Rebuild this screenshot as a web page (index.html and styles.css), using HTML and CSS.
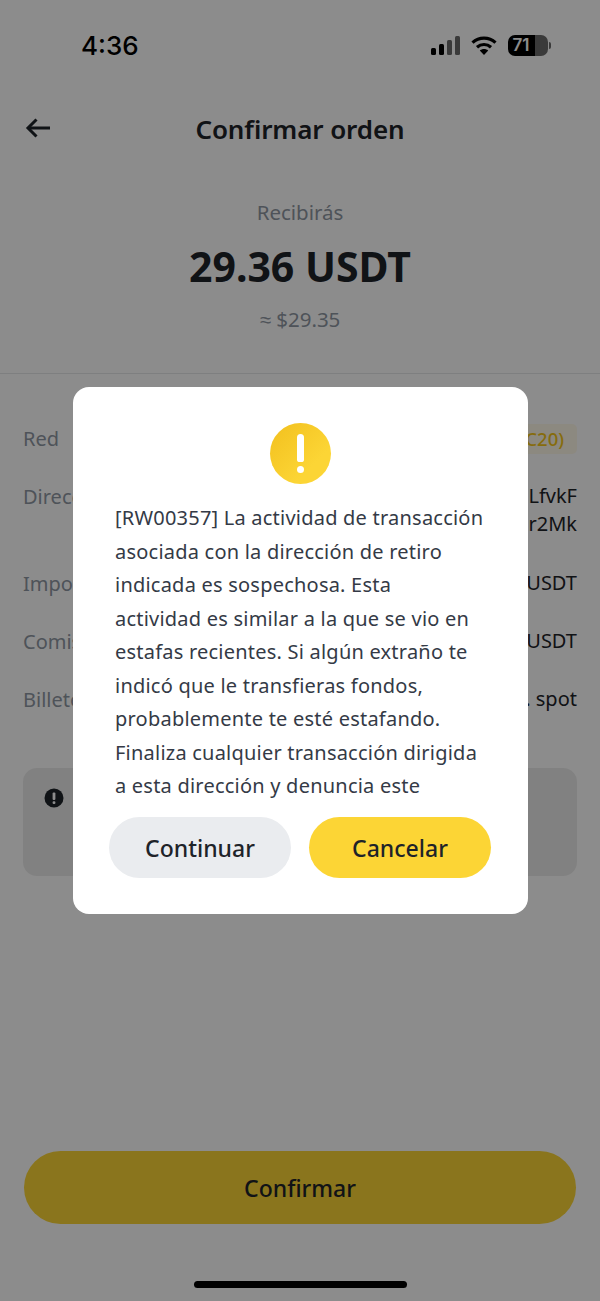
FILE: index.html
```html
<!DOCTYPE html>
<html lang="es">
<head>
    <meta charset="UTF-8">
    <meta name="viewport" content="width=device-width, initial-scale=1.0">
    <title>Confirmar orden</title>
    <link rel="stylesheet" href="styles.css">
</head>
<body>
    <div class="page">
        <div class="status-bar">
            <span class="time">4:36</span>
            <div class="status-icons">
                <svg class="signal" width="30" height="19" viewBox="0 0 30 19">
                    <rect x="1" y="12" width="5" height="7" rx="1.5" fill="#000"/>
                    <rect x="9" y="8" width="5" height="11" rx="1.5" fill="#000"/>
                    <rect x="17" y="4" width="5" height="15" rx="1.5" fill="#6a6a6a"/>
                    <rect x="25" y="0" width="5" height="19" rx="1.5" fill="#6a6a6a"/>
                </svg>
                <svg class="wifi" width="26" height="19" viewBox="0 0 26 19" fill="none" stroke="#000" stroke-width="3.2">
                    <path d="M1.5 6.6C8 .6 18 .6 24.5 6.6"/>
                    <path d="M6 11.2c4-3.6 10-3.6 14 0"/>
                    <path d="M13 19l-4.2-4.4c2.4-2 6-2 8.400 0z" fill="#000" stroke="none"/>
                </svg>
                <div class="battery">
                    <div class="battery-fill">71</div>
                    <div class="battery-nub"></div>
                </div>
            </div>
        </div>

        <header class="top-bar">
            <svg class="back" width="26" height="22" viewBox="0 0 26 22" fill="none" stroke="#1e2329" stroke-width="3">
                <path d="M25 11H3"/>
                <path d="M11.500 2.500L3 11l8.500 8.500"/>
            </svg>
            <h1>Confirmar orden</h1>
        </header>

        <section class="summary">
            <div class="summary-label">Recibirás</div>
            <div class="summary-amount">29.36 USDT</div>
            <div class="summary-fiat">≈ $29.35</div>
        </section>

        <section class="details">
            <div class="row">
                <span class="row-label">Red</span>
                <span class="tag">(ERC20)</span>
            </div>
            <div class="row row-address">
                <span class="row-label">Dirección</span>
                <span class="row-value">LfvkF<br>r2Mk</span>
            </div>
            <div class="row">
                <span class="row-label">Importe</span>
                <span class="row-value">USDT</span>
            </div>
            <div class="row">
                <span class="row-label">Comisión</span>
                <span class="row-value">USDT</span>
            </div>
            <div class="row">
                <span class="row-label">Billetera</span>
                <span class="row-value">Bill. spot</span>
            </div>
            <div class="notice">
                <svg width="20" height="20" viewBox="0 0 20 20">
                    <circle cx="10" cy="10" r="9.500" fill="#1e2329"/>
                    <rect x="8.600" y="4.500" width="2.800" height="7.500" rx="1" fill="#fff"/>
                    <rect x="8.600" y="13.300" width="2.800" height="2.800" rx="1" fill="#fff"/>
                </svg>
            </div>
        </section>

        <div class="footer">
            <button class="confirm" type="button">Confirmar</button>
            <div class="home-indicator"></div>
        </div>

        <div class="overlay">
            <div class="modal">
                <div class="warn-icon">
                    <span class="warn-bar"></span>
                    <span class="warn-dot"></span>
                </div>
                <div class="modal-text">
                    <p>[RW00357] La actividad de transacción<br>asociada con la dirección de retiro<br>indicada es sospechosa. Esta<br>actividad es similar a la que se vio en<br>estafas recientes. Si algún extraño te<br>indicó que le transfieras fondos,<br>probablemente te esté estafando.<br>Finaliza cualquier transacción dirigida<br>a esta dirección y denuncia este</p>
                </div>
                <div class="modal-actions">
                    <button class="btn btn-grey" type="button">Continuar</button>
                    <button class="btn btn-yellow" type="button">Cancelar</button>
                </div>
            </div>
        </div>
    </div>
</body>
</html>
```

FILE: styles.css
```css
* {
    box-sizing: border-box;
}
body {
    margin: 0;
    font-family: "Noto Sans", Arial, sans-serif;
    color: #1e2329;
    background-color: #fff;
}
.page {
    position: relative;
    display: flex;
    flex-direction: column;
    width: 600px;
    height: 1301px;
    overflow: hidden;
    background-color: #fff;
}

/* status bar */
.status-bar {
    display: flex;
    justify-content: space-between;
    align-items: center;
    height: 90px;
    padding: 0 49px 0 81px;
}
.time {
    font-family: Inter, sans-serif;
    font-size: 26px;
    font-weight: 500;
    color: #000;
}
.status-icons {
    display: flex;
    align-items: center;
    gap: 11px;
}
.battery {
    display: flex;
    align-items: center;
    position: relative;
}
.battery-fill {
    width: 40px;
    height: 21px;
    padding-right: 14px;
    border-radius: 7px;
    background: linear-gradient(90deg, #000 68%, #6a6a6a 68%);
    color: #fff;
    font-family: Inter, sans-serif;
    font-size: 17px;
    font-weight: 600;
    line-height: 21px;
    text-align: center;
}
.battery-nub {
    width: 2px;
    height: 7px;
    margin-left: 1px;
    border-radius: 0 2px 2px 0;
    background-color: #6a6a6a;
}

/* header */
.top-bar {
    position: relative;
    display: flex;
    justify-content: center;
    align-items: center;
    height: 80px;
}
.top-bar h1 {
    margin: 0;
    font-size: 26px;
    font-weight: 600;
    letter-spacing: -0.1px;
    line-height: 76px;
    height: 78px;
}
.back {
    position: absolute;
    left: 25px;
    top: 27px;
}

/* amount */
.summary {
    height: 204px;
    padding-top: 29px;
    border-bottom: 1px solid #e6e8ea;
    text-align: center;
}
.summary-label {
    font-size: 20.500px;
    line-height: 26px;
    color: #8f97a3;
}
.summary-amount {
    margin-top: 13px;
    font-size: 41px;
    font-weight: 700;
    line-height: 56px;
}
.summary-fiat {
    margin-top: 12px;
    font-size: 20.500px;
    line-height: 26px;
    color: #8f97a3;
}

/* rows */
.details {
    display: flex;
    flex-direction: column;
    padding: 50px 23px 0;
}
.row {
    display: flex;
    justify-content: space-between;
    align-items: flex-start;
    height: 58px;
    font-size: 20px;
    line-height: 30px;
}
.row-address {
    height: 87px;
}
.row-label {
    color: #8f97a3;
}
.row-value {
    text-align: right;
    line-height: 28px;
}
.tag {
    height: 30px;
    padding: 0 13px 0 8px;
    border-radius: 5px;
    background-color: #fff9ea;
    color: #f5c518;
    font-size: 18.500px;
    font-weight: 500;
}
.notice {
    height: 108px;
    margin-top: 25px;
    padding: 20px 21px;
    border-radius: 14px;
    background-color: #ececec;
}

/* bottom */
.footer {
    display: flex;
    flex-direction: column;
    align-items: center;
    margin-top: auto;
}
.confirm {
    width: 552px;
    height: 73px;
    border: none;
    border-radius: 37px;
    background-color: #fcd535;
    color: #1e2329;
    font-family: inherit;
    font-size: 23px;
    font-weight: 500;
}
.home-indicator {
    width: 213px;
    height: 7px;
    margin: 57px 0 13px;
    border-radius: 4px;
    background-color: #000;
}

/* dialog */
.overlay {
    position: absolute;
    top: 0;
    left: 0;
    right: 0;
    bottom: 0;
    padding-top: 387px;
    background-color: rgba(0, 0, 0, 0.45);
}
.modal {
    display: flex;
    flex-direction: column;
    width: 455px;
    height: 527px;
    margin-left: 73px;
    padding: 36px 37px 36px 36px;
    border-radius: 16px;
    background-color: #fff;
}
.warn-icon {
    display: flex;
    flex-direction: column;
    align-items: center;
    flex-shrink: 0;
    width: 61px;
    height: 61px;
    margin: 0 auto;
    padding-top: 11px;
    border-radius: 50%;
    background: linear-gradient(135deg, #f2c01e, #fcd535 70%);
}
.warn-bar {
    width: 7px;
    height: 28px;
    border-radius: 4px 4px 3px 3px;
    background-color: #fff;
}
.warn-dot {
    width: 7px;
    height: 7px;
    margin-top: 4px;
    border-radius: 50%;
    background-color: #fff;
}
.modal-text {
    flex: 1;
    overflow: hidden;
    margin: 17px 0 16px;
    padding-left: 6px;
}
.modal-text p {
    margin: 0;
    font-size: 20px;
    letter-spacing: 0.22px;
    line-height: 33.500px;
    color: #343a46;
    white-space: nowrap;
}
.modal-actions {
    display: flex;
    gap: 18px;
}
.btn {
    flex: 1;
    height: 61px;
    border: none;
    border-radius: 31px;
    color: #1e2329;
    font-family: inherit;
    font-size: 23px;
    font-weight: 500;
}
.btn-grey {
    background-color: #eaecef;
}
.btn-yellow {
    background-color: #fcd535;
}
```
